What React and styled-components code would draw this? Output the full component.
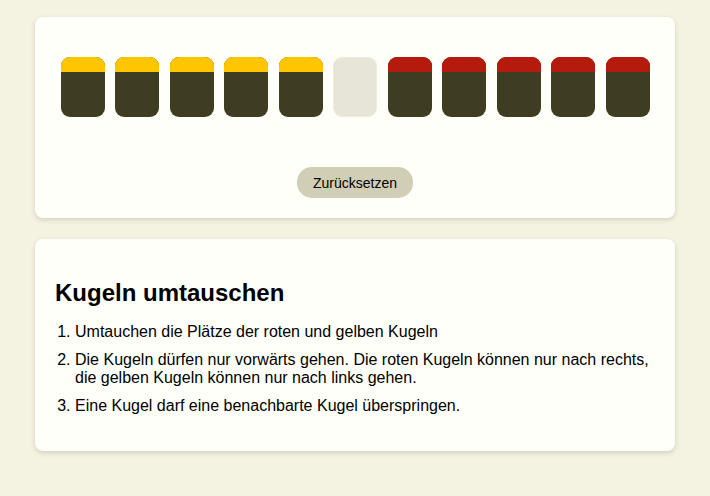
import React from "react";
import styled, { createGlobalStyle } from "styled-components";

const Global = createGlobalStyle`
  html, body { margin: 0; padding: 0; }
  body {
    background: #f4f2e1;
    font-family: "Liberation Sans", Arial, sans-serif;
    color: #000;
  }
`;

const Page = styled.div`
  display: flex;
  flex-direction: column;
  align-items: center;
  gap: 21px;
  padding: 17px 0;
`;

const Card = styled.section`
  box-sizing: border-box;
  width: 640px;
  background: #fffff9;
  border-radius: 8px;
  box-shadow: 0 2px 5px rgba(60, 60, 40, 0.18);
  padding: 20px;
`;

const GameCard = styled(Card)`
  display: flex;
  flex-direction: column;
  align-items: center;
`;

const Row = styled.div`
  display: flex;
  justify-content: center;
  gap: 10.5px;
  margin-top: 20px;
  margin-bottom: 50px;
`;

const Slot = styled.div`
  box-sizing: border-box;
  width: 44px;
  height: 60px;
  border-radius: 9px;
  overflow: hidden;
  display: flex;
  flex-direction: column;
  background: ${(p) => (p.$empty ? "#e7e5d7" : "#3f3d21")};
  border: ${(p) => (p.$empty ? "1px solid #eeecdf" : "none")};
`;

const Cap = styled.div`
  height: 15px;
  background: ${(p) => (p.$color === "red" ? "#b51b0c" : "#ffc600")};
`;

const Button = styled.button`
  font-family: "Liberation Sans", Arial, sans-serif;
  font-size: 14px;
  color: #000;
  background: #d1ceb6;
  border: none;
  border-radius: 15px;
  height: 31px;
  padding: 0 16px;
  cursor: pointer;
`;

const Title = styled.h2`
  font-size: 24px;
  font-weight: bold;
  margin: 20px 0 16px;
`;

const List = styled.ol`
  margin: 0 0 16px;
  padding-left: 20px;
  font-size: 16px;
`;

const Item = styled.li`
  & + & { margin-top: 10px; }
`;

const balls = [
  "yellow", "yellow", "yellow", "yellow", "yellow", null,
  "red", "red", "red", "red", "red",
];

export default function App() {
  return (
    <>
      <Global />
      <Page>
        <GameCard>
          <Row>
            {balls.map((c, i) =>
              c ? (
                <Slot key={i}>
                  <Cap $color={c} />
                </Slot>
              ) : (
                <Slot key={i} $empty />
              )
            )}
          </Row>
          <Button>Zurücksetzen</Button>
        </GameCard>
        <Card>
          <Title>Kugeln umtauschen</Title>
          <List>
            <Item>Umtauchen die Plätze der roten und gelben Kugeln</Item>
            <Item>
              Die Kugeln dürfen nur vorwärts gehen. Die roten Kugeln können nur
              nach rechts, die gelben Kugeln können nur nach links gehen.
            </Item>
            <Item>Eine Kugel darf eine benachbarte Kugel überspringen.</Item>
          </List>
        </Card>
      </Page>
    </>
  );
}
